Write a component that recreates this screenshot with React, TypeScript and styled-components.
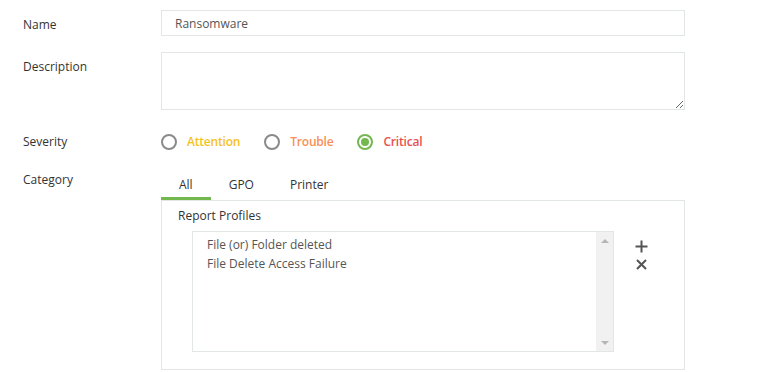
import * as React from 'react';
import styled, { createGlobalStyle } from 'styled-components';

const GlobalStyle = createGlobalStyle`
  html, body {
    margin: 0;
    padding: 0;
    background: #fff;
  }
  body {
    font-family: 'Open Sans', 'Noto Sans', Arial, sans-serif;
    font-size: 12px;
    color: #333;
  }
  * {
    box-sizing: border-box;
  }
`;

type Severity = 'attention' | 'trouble' | 'critical';

const severityColors: Record<Severity, string> = {
  attention: '#f5c223',
  trouble: '#f79057',
  critical: '#e8504e',
};

const severities: { key: Severity; label: string }[] = [
  { key: 'attention', label: 'Attention' },
  { key: 'trouble', label: 'Trouble' },
  { key: 'critical', label: 'Critical' },
];

const tabs = ['All', 'GPO', 'Printer'];

const profiles = ['File (or) Folder deleted', 'File Delete Access Failure'];

const App: React.FC = () => {
  const [severity, setSeverity] = React.useState<Severity>('critical');
  const [activeTab, setActiveTab] = React.useState<string>('All');

  return (
    <>
      <GlobalStyle />
      <StyledForm>
        <StyledRow $top={10}>
          <StyledLabel $pad={6}>Name</StyledLabel>
          <StyledInput defaultValue='Ransomware' />
        </StyledRow>
        <StyledRow $top={16}>
          <StyledLabel $pad={6}>Description</StyledLabel>
          <StyledTextArea />
        </StyledRow>
        <StyledRow $top={23}>
          <StyledLabel $pad={0}>Severity</StyledLabel>
          <StyledRadioGroup>
            {severities.map((s) => (
              <StyledRadioItem key={s.key} onClick={() => setSeverity(s.key)}>
                <StyledRadioCircle $checked={severity === s.key} />
                <StyledRadioText $color={severityColors[s.key]}>{s.label}</StyledRadioText>
              </StyledRadioItem>
            ))}
          </StyledRadioGroup>
        </StyledRow>
        <StyledRow $top={20}>
          <StyledLabel $pad={1}>Category</StyledLabel>
          <StyledCategory>
            <StyledTabBar>
              {tabs.map((t) => (
                <StyledTab key={t} $active={activeTab === t} onClick={() => setActiveTab(t)}>
                  {t}
                </StyledTab>
              ))}
            </StyledTabBar>
            <StyledPanel>
              <StyledPanelTitle>Report Profiles</StyledPanelTitle>
              <StyledPanelBody>
                <StyledListBox>
                  <StyledList>
                    {profiles.map((p) => (
                      <StyledListItem key={p}>{p}</StyledListItem>
                    ))}
                  </StyledList>
                  <StyledScrollTrack>
                    <StyledArrow $dir='up' />
                    <StyledArrow $dir='down' />
                  </StyledScrollTrack>
                </StyledListBox>
                <StyledActions>
                  <StyledIconButton title='Add'>
                    <svg width='13' height='13' viewBox='0 0 13 13'>
                      <path d='M6.5 0.5V12.5M0.5 6.5H12.5' stroke='#555' strokeWidth='2' />
                    </svg>
                  </StyledIconButton>
                  <StyledIconButton title='Remove'>
                    <svg width='11' height='11' viewBox='0 0 11 11'>
                      <path d='M1 1L10 10M10 1L1 10' stroke='#555' strokeWidth='2' />
                    </svg>
                  </StyledIconButton>
                </StyledActions>
              </StyledPanelBody>
            </StyledPanel>
          </StyledCategory>
        </StyledRow>
      </StyledForm>
    </>
  );
};

export default App;

const StyledForm = styled.div`
  display: flex;
  flex-direction: column;
  padding: 0 96px 0 23px;
  width: 781px;
`;
const StyledRow = styled.div<{ $top: number }>`
  display: flex;
  flex-direction: row;
  align-items: flex-start;
  margin-top: ${(p) => p.$top}px;
`;
const StyledLabel = styled.div<{ $pad: number }>`
  width: 138px;
  flex-shrink: 0;
  padding-top: ${(p) => p.$pad}px;
  line-height: 17px;
  color: #333;
`;
const StyledInput = styled.input`
  flex: 1;
  height: 26px;
  border: 1px solid #e2e6e6;
  padding: 0 13px;
  font-family: inherit;
  font-size: 12px;
  color: #555;
  outline: none;
`;
const StyledTextArea = styled.textarea`
  flex: 1;
  height: 58px;
  border: 1px solid #e2e6e6;
  padding: 6px 13px;
  font-family: inherit;
  font-size: 12px;
  resize: vertical;
  outline: none;
  display: block;
`;
const StyledRadioGroup = styled.div`
  display: flex;
  flex-direction: row;
  align-items: center;
  gap: 24px;
  height: 17px;
`;
const StyledRadioItem = styled.label`
  display: flex;
  flex-direction: row;
  align-items: center;
  gap: 10px;
  cursor: pointer;
`;
const StyledRadioCircle = styled.span<{ $checked: boolean }>`
  width: 16px;
  height: 16px;
  border-radius: 50%;
  border: 2px solid ${(p) => (p.$checked ? '#72b84f' : '#8a8a8a')};
  display: flex;
  align-items: center;
  justify-content: center;
  &::after {
    content: '';
    width: 8px;
    height: 8px;
    border-radius: 50%;
    background: ${(p) => (p.$checked ? '#72b84f' : 'transparent')};
  }
`;
const StyledRadioText = styled.span<{ $color: string }>`
  color: ${(p) => p.$color};
  font-weight: 600;
  line-height: 17px;
  letter-spacing: -0.2px;
`;
const StyledCategory = styled.div`
  flex: 1;
  display: flex;
  flex-direction: column;
`;
const StyledTabBar = styled.div`
  display: flex;
  flex-direction: row;
`;
const StyledTab = styled.div<{ $active: boolean }>`
  padding: 6px 18px 4px;
  line-height: 17px;
  color: #333;
  border-bottom: 3px solid ${(p) => (p.$active ? '#72b84f' : 'transparent')};
  cursor: pointer;
`;
const StyledPanel = styled.div`
  border: 1px solid #e2e6e6;
  height: 170px;
  padding: 6px 0 0 16px;
`;
const StyledPanelTitle = styled.div`
  line-height: 17px;
  color: #333;
`;
const StyledPanelBody = styled.div`
  display: flex;
  flex-direction: row;
  align-items: flex-start;
  margin-top: 7px;
  padding-left: 14px;
`;
const StyledListBox = styled.div`
  width: 422px;
  height: 121px;
  border: 1px solid #e2e6e6;
  display: flex;
  flex-direction: row;
`;
const StyledList = styled.div`
  flex: 1;
  padding: 3px 14px;
`;
const StyledListItem = styled.div`
  line-height: 19px;
  color: #555;
`;
const StyledScrollTrack = styled.div`
  width: 17px;
  background: #f1f1f1;
  display: flex;
  flex-direction: column;
  justify-content: space-between;
  align-items: center;
  padding: 7px 0 6px;
`;
const StyledArrow = styled.span<{ $dir: 'up' | 'down' }>`
  width: 0;
  height: 0;
  border-left: 4px solid transparent;
  border-right: 4px solid transparent;
  ${(p) =>
    p.$dir === 'up'
      ? 'border-bottom: 4px solid #b5b5b5;'
      : 'border-top: 4px solid #b5b5b5;'}
`;
const StyledActions = styled.div`
  display: flex;
  flex-direction: column;
  align-items: center;
  gap: 6px;
  margin-left: 21px;
  padding-top: 9px;
`;
const StyledIconButton = styled.span`
  display: flex;
  align-items: center;
  justify-content: center;
  width: 13px;
  height: 12px;
  cursor: pointer;
`;
